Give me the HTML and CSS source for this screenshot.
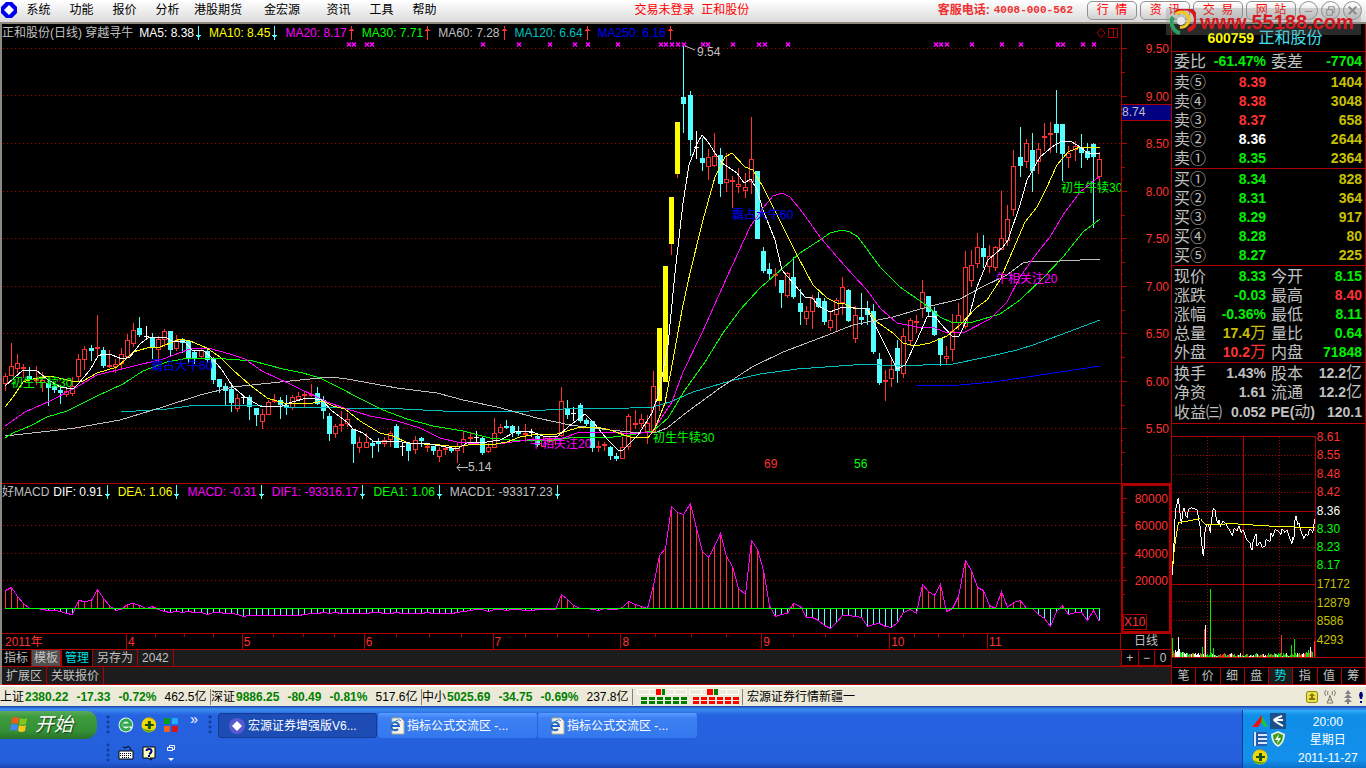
FILE: index.html
```html
<!DOCTYPE html>
<html lang="zh-CN">
<head>
  <meta charset="UTF-8">
  <meta name="viewport" content="width=device-width, initial-scale=1.0">
  <title>宏源证券增强版</title>
  <link rel="stylesheet" href="styles.css">
</head>
<body>
  <svg class="defs" aria-hidden="true">
    <symbol id="down" viewBox="0 0 5 14"><path d="M2 0h1v9h2v1H4v1H3v3H2v-3H1v-1H0V9h2z" fill="#54ffff"/></symbol>
    <symbol id="up" viewBox="0 0 5 14"><path d="M2 14h1V5h2V4H4V3H3V0H2v3H1v1H0v1h2z" fill="#ff3232"/></symbol>
    <symbol id="plus-ball" viewBox="0 0 16 16">
      <circle cx="8" cy="8" r="7.5" fill="#f3d808"/><path d="M1 11a8 8 0 0 0 13 1q-5 3-13-1z" fill="#48a010"/>
      <path d="M14 3a8 8 0 0 0-9-2q5 0 9 2z" fill="#b8860b"/><path d="M7 4h3v3h3v2h-3v3H7V9H4V7h3z" fill="#145214"/>
    </symbol>
    <symbol id="ie" viewBox="0 0 18 18">
      <path d="M5 1h9l3 3v13H5z" fill="#f6f4e6" stroke="#a8a898"/>
      <path d="M11 12a4 4 0 1 1 1-3H4" fill="none" stroke="#1b62c4" stroke-width="2"/>
      <path d="M1 14Q0 11 6 6t8-2" fill="none" stroke="#3c8ce0"/>
    </symbol>
  </svg>

  <header class="menubar">
    <svg class="logo" viewBox="0 0 16 16"><path d="M5 0h6l5 5v6l-5 5H5l-5-5V5z" fill="#0000f0"/><path d="M8 3l5 5-5 5-5-5z" fill="#fff"/></svg>
    <nav class="menu">
      <button>系统</button><button>功能</button><button>报价</button><button>分析</button>
      <button class="w4">港股期货</button><button class="w3">金宏源</button>
      <button>资讯</button><button>工具</button><button>帮助</button>
    </nav>
    <div class="login-state">交易未登录&nbsp; 正和股份</div>
    <div class="phone">客服电话:<span>4008-000-562</span></div>
    <div class="top-buttons">
      <button>行&nbsp; 情</button><button>资&nbsp; 讯</button><button>交&nbsp; 易</button><button>网&nbsp; 站</button>
      <button class="round" aria-label="最小化"><svg viewBox="0 0 18 18"><path d="M5 10h8"/></svg></button>
      <button class="round" aria-label="还原"><svg viewBox="0 0 18 18"><path d="M7 8V5h6v6h-2M5 8h6v6H5z"/></svg></button>
      <button class="round" aria-label="关闭"><svg viewBox="0 0 18 18"><path d="M5 5l8 8M13 5l-8 8" stroke-width="2"/></svg></button>
    </div>
    <div class="watermark">
      <svg viewBox="0 0 26 26"><path d="M6 4a11 11 0 1 1 12 17" fill="none" stroke="#d81820" stroke-width="4"/><path d="M3 8a11 11 0 0 0 7 16" fill="none" stroke="#2aa060" stroke-width="4"/><path d="M6 5q5-4 10 0t2 9-8 4" fill="none" stroke="#f5c820" stroke-width="3"/><circle cx="11" cy="12" r="4" fill="#e8e8e8"/></svg>
      <span>www.55188.com</span>
    </div>
  </header>

  <main class="main">
    <section class="charts">
      <div class="pane price-pane">
        <div class="legend">
          <span class="grey">正和股份(日线) 穿越寻牛</span>
          <span class="white">MA5: 8.38<svg><use href="#down"/></svg></span>
          <span class="yellow">MA10: 8.45<svg><use href="#down"/></svg></span>
          <span class="magenta">MA20: 8.17<svg><use href="#up"/></svg></span>
          <span class="green">MA30: 7.71<svg><use href="#up"/></svg></span>
          <span class="grey">MA60: 7.28<svg><use href="#up"/></svg></span>
          <span class="teal">MA120: 6.64<svg><use href="#up"/></svg></span>
          <span class="blue">MA250: 6.16<svg><use href="#up"/></svg></span>
          <svg class="pane-tools" viewBox="0 0 24 12"><path d="M6 1.5l4 4.5-4 4.500-4-4.500zM13.500 1.500h9v9h-9zM18.500 1.500v9" fill="none" stroke="#b00000"/></svg>
        </div>
        <svg class="plot" id="price" viewBox="2 42 1119 441"></svg>
      </div>
      <div class="axis"><svg class="plot" id="priceAxis" viewBox="1121 24 50 459"></svg></div>

      <div class="pane macd-pane">
        <div class="legend macd-legend">
          <span class="grey">好MACD</span>
          <span class="white">DIF: 0.91<svg><use href="#down"/></svg></span>
          <span class="yellow">DEA: 1.06<svg><use href="#down"/></svg></span>
          <span class="magenta">MACD: -0.31<svg><use href="#down"/></svg></span>
          <span class="magenta">DIF1: -93316.17<svg><use href="#down"/></svg></span>
          <span class="green">DEA1: 1.06<svg><use href="#down"/></svg></span>
          <span class="grey">MACD1: -93317.23<svg><use href="#down"/></svg></span>
        </div>
        <svg class="plot" id="macd" viewBox="2 500 1119 133"></svg>
      </div>
      <div class="axis macd-axis"><svg class="plot" id="macdAxis" viewBox="1123 486 46 145"></svg></div>

      <div class="dates"><svg class="plot" id="dates" viewBox="2 634 1119 15"></svg></div>
      <div class="period">日线</div>

      <div class="tools">
        <button class="black">指标</button><button class="on">模板</button><button class="black manage">管理</button><button>另存为</button><button>2042</button>
      </div>
      <div class="zoomers"><button>+</button><button>−</button><button>0</button></div>
      <div class="tools ext">
        <button>扩展区</button><button>关联报价</button>
      </div>
    </section>

    <aside class="quote">
      <h1><b>600759</b> 正和股份</h1>
      <table>
        <tr class="g"><th>委比</th><td>-61.47%</td><th>委差</th><td>-7704</td></tr>
      </table>
      <table class="book">
        <tr><th>卖⑤</th><td class="r">8.39</td><td>1404</td></tr>
        <tr><th>卖④</th><td class="r">8.38</td><td>3048</td></tr>
        <tr><th>卖③</th><td class="r">8.37</td><td>658</td></tr>
        <tr><th>卖②</th><td class="w">8.36</td><td>2644</td></tr>
        <tr><th>卖①</th><td class="g">8.35</td><td>2364</td></tr>
      </table>
      <table class="book">
        <tr><th>买①</th><td class="g">8.34</td><td>828</td></tr>
        <tr><th>买②</th><td class="g">8.31</td><td>364</td></tr>
        <tr><th>买③</th><td class="g">8.29</td><td>917</td></tr>
        <tr><th>买④</th><td class="g">8.28</td><td>80</td></tr>
        <tr><th>买⑤</th><td class="g">8.27</td><td>225</td></tr>
      </table>
      <table class="stats">
        <tr class="g"><th>现价</th><td>8.33</td><th>今开</th><td>8.15</td></tr>
        <tr class="g"><th>涨跌</th><td>-0.03</td><th>最高</th><td class="r">8.40</td></tr>
        <tr class="g"><th>涨幅</th><td>-0.36%</td><th>最低</th><td>8.11</td></tr>
        <tr class="g"><th>总量</th><td class="y">17.4<i>万</i></td><th>量比</th><td>0.64</td></tr>
        <tr class="g"><th>外盘</th><td class="r">10.2<i>万</i></td><th>内盘</th><td>71848</td></tr>
      </table>
      <table class="stats">
        <tr><th>换手</th><td>1.43%</td><th>股本</th><td>12.2<i>亿</i></td></tr>
        <tr><th>净资</th><td>1.61</td><th>流通</th><td>12.2<i>亿</i></td></tr>
        <tr><th>收益㈢</th><td>0.052</td><th><b>PE(</b>动<b>)</b></th><td>120.1</td></tr>
      </table>
      <svg class="plot mini" id="mini" viewBox="1172 423 193 244"></svg>
      <div class="tabs">
        <button>笔</button><button>价</button><button>细</button><button>盘</button><button class="on">势</button><button>指</button><button>值</button><button>筹</button>
      </div>
    </aside>
  </main>

  <footer class="status">
    <div class="index">上证<b>2380.22</b><b>-17.33</b><b>-0.72%</b><span>462.5亿</span></div>
    <div class="index">深证<b>9886.25</b><b>-80.49</b><b>-0.81%</b><span>517.6亿</span></div>
    <div class="index">中小<b>5025.69</b><b>-34.75</b><b>-0.69%</b><span>237.8亿</span></div>
    <svg class="lights" viewBox="0 0 104 16">
      <path d="M.5.500h49v5H.500zM12.500.500v5M37.500.500v5M52.500.500h49v5h-49zM64.500.500v5M89.500.500v5" fill="none" stroke="#fff"/>
      <path d="M19 0h5v6h-5zM70 0h6v6h-6z" fill="#f00"/><path d="M25 0h3v6h-3zM77 0h4v6h-4z" fill="#008000"/>
      <path d="M4 9.500h47M4 13.500h47" stroke="#008000" stroke-width="3" stroke-dasharray="6 2"/>
      <path d="M56 9.500h47M56 13.500h47" stroke="#f00" stroke-width="3" stroke-dasharray="6 2"/>
    </svg>
    <div class="news">宏源证券行情新疆一</div>
    <svg class="status-icons" viewBox="0 0 60 16">
      <rect x="0.500" y="2.500" width="11" height="11" rx="2" fill="#e8e050" stroke="#908800"/><path d="M6 4l3 3H7v2h2v2H3V9h2V7H3z" fill="#807800"/>
      <path d="M24 6v3M21 14l3-7 3 7zM22 11h4M20 1q-3 3 0 6M28 1q3 3 0 6M22 2q-1 2 0 4M26 2q1 2 0 4" fill="none" stroke="#807c70"/>
      <path d="M42 1l3 4h-6zM42 5l4 4h-8zM42 9l4 4h-8zM41 12h2v3h-2z" fill="#808080"/>
      <path d="M54 3h2l1 3-1 4h-2l-1-4zM54 12h2v2h-2z" fill="#000080"/>
    </svg>
  </footer>

  <footer class="taskbar">
    <button class="start">
      <svg viewBox="0 0 20 18"><path d="M3 2q4-2 7 0L9 8Q6 6 2 8z" fill="#f05a20"/><path d="M11 2q4 2 7 0l-1 6q-4 2-7 0z" fill="#80c820"/><path d="M2 9q4-2 7 0l-1 6q-4-2-7 0z" fill="#4088f8"/><path d="M10 9q4 2 7 0l-1 6q-4 2-7 0z" fill="#f8c820"/></svg>
      开始
    </button>
    <div class="launch">
      <div class="row">
        <i class="grip"></i>
        <svg viewBox="0 0 16 16"><circle cx="8" cy="8" r="7.500" fill="#e8f4e8"/><path d="M12 11a5 5 0 1 1 1-3H5" fill="none" stroke="#30a850" stroke-width="3"/></svg>
        <svg><use href="#plus-ball"/></svg>
        <svg viewBox="0 0 16 16"><path d="M1 1h6v6H1z" fill="#00a010"/><path d="M9 1h6v6H9z" fill="#20b0ff"/><path d="M1 9h6v6H1z" fill="#f06020"/><path d="M9 9h6v6H9z" fill="#e01010"/></svg>
        <span class="more">»</span>
      </div>
      <div class="row">
        <i class="grip"></i>
        <svg viewBox="0 0 16 16"><path d="M1 6h14v8H1z" fill="#fff" stroke="#000"/><path d="M2 8.500h12M2 10.500h12M4 12.500h8" stroke="#000" stroke-dasharray="1 1"/><path d="M5 2q2 2 4 0t4 3" fill="none" stroke="#000"/></svg>
        <svg viewBox="0 0 16 16"><path d="M2 2h12v11H9l2 2-4-2H2z" fill="#ffffc0" stroke="#000"/><path d="M5.500 6q0-2 2.500-2t2.500 2T8 9M8 10v2" fill="none" stroke="#000080" stroke-width="2"/></svg>
        <svg class="restore" viewBox="0 0 10 16"><path d="M3.500 2V.500h5v4H7M1.500 2.500h5v3h-5z" fill="none" stroke="#fff"/><path d="M2 13h6l-3 3z" fill="#fff"/></svg>
      </div>
    </div>
    <i class="grip tall"></i>
    <div class="tasks">
      <button class="active"><svg viewBox="0 0 18 18"><circle cx="9" cy="9" r="8" fill="#5a5ad0"/><path d="M9 4l5 5-5 5-5-5z" fill="#fff"/></svg>宏源证券增强版V6...</button>
      <button><svg><use href="#ie"/></svg>指标公式交流区 -...</button>
      <button><svg><use href="#ie"/></svg>指标公式交流区 -...</button>
    </div>
    <div class="tray">
      <div class="tray-icons">
        <svg viewBox="0 0 16 16"><path d="M0 14L10 2v6l-4 6z" fill="#f01010"/><path d="M10 3l6 11h-3l-4-4z" fill="#20c040"/></svg>
        <svg viewBox="0 0 16 16"><path d="M0 0h16v16H0z" fill="#1c5088"/><path d="M12 3Q4 6 4 7t9 6M4 7h9" fill="none" stroke="#fff" stroke-width="2"/></svg>
        <svg viewBox="0 0 16 16"><path d="M1 1h14v14H1z" fill="#2858a8"/><path d="M3 1v14M6 4h9M6 8h9M6 12h9" stroke="#d8e8ff" stroke-width="2"/></svg>
        <svg viewBox="0 0 16 16"><path d="M8 0l7 3q0 9-7 13Q1 12 1 3z" fill="#e8f0d8"/><path d="M8 2l5 2q0 7-5 10Q3 11 3 4z" fill="#3c9c20"/><path d="M9 3L5 9h3l-1 4 4-6H8z" fill="#fff"/></svg>
        <svg><use href="#plus-ball"/></svg>
      </div>
      <div class="clock"><span>20:00</span><span>星期日</span><span>2011-11-27</span></div>
    </div>
  </footer>

  <script src="script.js"></script>
</body>
</html>
```
FILE: styles.css
```css
* {
  box-sizing: border-box;
}
body {
  margin: 0;
  height: 100vh;
  min-height: 600px;
  display: flex;
  flex-direction: column;
  background-color: #000;
  font-family: "Liberation Sans", "Noto Sans CJK SC", sans-serif;
  font-size: 12px;
  line-height: 16px;
  color: #c0c0c0;
  overflow: hidden;
}
button {
  font: inherit;
  color: inherit;
  margin: 0;
  padding: 0;
  border: none;
  background: none;
  white-space: nowrap;
}
.defs {
  display: none;
}
.plot {
  display: block;
  width: 100%;
  height: 100%;
  min-height: 0;
  flex: 1;
  font-size: 12px;
}

/* menu bar */
.menubar {
  position: relative;
  flex: none;
  height: 24px;
  display: flex;
  align-items: center;
  padding: 0 4px 2px 1px;
  background: linear-gradient(#fff, #ddd 21px);
  border-bottom: 2px solid #8c8880;
  color: #000;
}
.logo {
  width: 16px;
  height: 16px;
}
.menu {
  display: flex;
}
.menu button {
  width: 43px;
}
.menu .w4 {
  width: 58px;
}
.menu .w3 {
  width: 70px;
}
.login-state {
  margin: 0 auto;
  color: #f00;
}
.phone {
  display: flex;
  gap: 4px;
  margin-right: 14px;
  font-weight: bold;
  color: #f03030;
}
.phone span {
  font-family: "Liberation Mono", monospace;
  font-size: 11px;
}
.top-buttons {
  display: flex;
  gap: 3px;
}
.top-buttons button {
  width: 50px;
  height: 19px;
  border: 1px solid #909090;
  border-radius: 5px;
  background: linear-gradient(#fff, #d0d0d0);
  color: #f00;
}
.top-buttons .round {
  width: 19px;
  border-radius: 50%;
}
.round svg {
  display: block;
  width: 17px;
  height: 17px;
  fill: none;
  stroke: #888;
}
.watermark {
  position: absolute;
  z-index: 2;
  top: 8px;
  right: 5px;
  width: 195px;
  height: 27px;
  display: flex;
  align-items: center;
  gap: 4px;
  padding-left: 4px;
  background-color: rgba(140, 140, 140, 0.3);
  color: #d81820;
  font-size: 20px;
  line-height: 24px;
  font-weight: bold;
}
.watermark svg {
  width: 26px;
  height: 26px;
}

/* chart area */
.main {
  flex: 1;
  min-height: 0;
  display: flex;
}
.charts {
  flex: 1;
  min-width: 0;
  display: grid;
  grid-template-columns: minmax(0, 1fr) 50px;
  grid-template-rows: minmax(0, 1fr) 149px 16px 17px 19px;
  border-left: 2px solid #8c8880;
}
.pane {
  display: flex;
  flex-direction: column;
  min-height: 0;
}
.price-pane {
  border-bottom: 1px solid #b00000;
}
.axis {
  min-height: 0;
  border-bottom: 1px solid #b00000;
}
.macd-axis {
  border: 2px solid #b00000;
}
.legend {
  flex: none;
  height: 18px;
  display: flex;
  align-items: center;
  gap: 8px;
  white-space: nowrap;
}
.macd-legend {
  height: 16px;
}
.legend span {
  display: flex;
  align-items: center;
  gap: 2px;
}
.legend span:first-child {
  margin-right: -2px;
}
.macd-legend span:first-child {
  margin-right: -4px;
}
.legend span svg {
  width: 5px;
  height: 14px;
}
.legend .pane-tools {
  width: 24px;
  height: 12px;
  margin-left: auto;
  margin-right: 2px;
}
.grey { color: #c0c0c0; fill: #c0c0c0; }
.white { color: #fff; fill: #fff; }
.yellow { color: #ff0; fill: #ff0; }
.magenta { color: #f0f; fill: #f0f; }
.green { color: #0f0; fill: #0f0; }
.teal { color: #00c0c0; fill: #00c0c0; }
.blue { color: #00f; fill: #00f; }
.red { color: #ff3232; fill: #ff3232; }
.olive { color: #c8c000; fill: #c8c000; }

.shape {
  shape-rendering: crispEdges;
}
.dates {
  border: 1px solid #b00000;
  border-width: 1px 1px 0 0;
}
.period {
  border-top: 1px solid #b00000;
  text-align: center;
  line-height: 15px;
}
.tools {
  display: flex;
  background-color: #1c1c1c;
  border-top: 1px solid #b00000;
}
.tools button {
  padding: 0 4px;
  border-right: 1px solid #b00000;
  line-height: 16px;
}
.tools .black {
  background-color: #000;
  padding: 0 3px 0 2px;
}
.tools .on {
  background-color: #505050;
  border-right-width: 2px;
  padding: 0 2px;
}
.tools .manage {
  color: #00e0e0;
  padding: 0 3px;
}
.zoomers {
  display: flex;
  border: 1px solid #b00000;
  border-right: 0;
}
.zoomers button {
  flex: 1;
  line-height: 14px;
}
.zoomers button + button {
  border-left: 1px solid #b00000;
}
.ext {
  grid-column: 1 / 3;
  border-bottom: 1px solid #b00000;
}

/* quote panel */
.quote {
  flex: none;
  width: 195px;
  display: flex;
  flex-direction: column;
  border: 1px solid #b00000;
  border-width: 0 1px;
}
.quote h1 {
  height: 28px;
  margin: 0;
  padding: 4px 7px 0 0;
  border-bottom: 1px solid #b00000;
  font-size: 16px;
  line-height: 20px;
  font-weight: normal;
  text-align: center;
  color: #40e0f0;
}
.quote h1 b {
  font-size: 14px;
  color: #ff0;
}
.quote table {
  width: 100%;
  table-layout: fixed;
  border-collapse: separate;
  border-spacing: 0;
  border-bottom: 1px solid #b00000;
}
.quote .book,
.quote .stats {
  padding-top: 1px;
}
.quote .stats + .stats {
  padding-bottom: 1px;
}
.quote tr {
  height: 19px;
  line-height: 19px;
}
.quote th {
  width: 36px;
  height: 19px;
  padding: 0 0 0 2px;
  font-size: 16px;
  font-weight: normal;
  text-align: left;
  white-space: nowrap;
}
.quote th b {
  font-size: 14px;
}
.quote td + th {
  width: 41px;
  padding-left: 5px;
}
.quote td {
  width: 58px;
  height: 19px;
  padding: 0;
  font-size: 14px;
  font-weight: bold;
  text-align: right;
  white-space: nowrap;
}
.quote td:last-child {
  padding-right: 3px;
}
.quote .book td:last-child {
  width: 99px;
  color: #c8c000;
}
.quote i {
  font-size: 16px;
  font-style: normal;
  font-weight: normal;
  line-height: 16px;
}
.quote .r { color: #ff3232; }
.quote .g td, .quote td.g { color: #00f000; }
.quote .g td.r { color: #ff3232; }
.quote .y, .quote .g td.y { color: #c8c000; }
.quote .w { color: #fff; }
.tabs {
  flex: none;
  height: 18px;
  display: flex;
  border: 1px solid #b00000;
  border-width: 1px 0;
}
.tabs button {
  flex: 1;
}
.tabs button + button {
  border-left: 1px solid #b00000;
}
.tabs .on {
  background-color: #1c1c1c;
  color: #00e0e0;
}

/* index line */
.status {
  flex: none;
  height: 21px;
  display: flex;
  align-items: center;
  background-color: #ece9d8;
  border-top: 2px solid #fff;
  color: #000;
  white-space: nowrap;
}
.index {
  flex: none;
  width: 211px;
  display: flex;
  gap: 8px;
  border-right: 1px solid #808080;
}
.index b {
  color: #008000;
}
.index b:first-child {
  margin-left: -7px;
}
.lights {
  width: 104px;
  height: 16px;
  margin-left: 4px;
}
.news {
  margin-left: 1px;
  padding-left: 4px;
  border-left: 1px solid #808080;
}
.status-icons {
  width: 60px;
  height: 16px;
  margin-left: auto;
}

/* task bar */
.taskbar {
  flex: none;
  height: 62px;
  display: flex;
  align-items: flex-start;
  background: linear-gradient(#1941a5, #3c8cf0 3px, #2663e0 9px, #245edb 56px, #1a48b0);
  color: #fff;
}
.start {
  width: 97px;
  height: 28px;
  margin-top: 5px;
  display: flex;
  align-items: center;
  gap: 6px;
  padding-left: 9px;
  border-radius: 0 10px 12px 0;
  background: linear-gradient(#5cab5c, #3c9a3c 6px, #359035 20px, #27702a);
  font-size: 19px;
  line-height: 26px;
  font-style: italic;
  text-shadow: 1px 1px 1px #144014;
}
.start svg {
  width: 20px;
  height: 18px;
}
.launch {
  width: 101px;
  margin-top: 5px;
  padding-left: 9px;
}
.row {
  height: 28px;
  display: flex;
  align-items: center;
  gap: 7px;
}
.row svg {
  width: 16px;
  height: 16px;
}
.row .restore {
  width: 10px;
  margin-left: 2px;
}
.more {
  margin: -12px 0 0 4px;
  font-size: 14px;
}
.grip {
  width: 5px;
  height: 20px;
  background: radial-gradient(circle at 2px 2px, #123f9c 1px, transparent 2px) 0 0 / 5px 5px;
}
.tall {
  margin: 9px 0 0 10px;
}
.tasks {
  display: flex;
  gap: 1px;
  margin: 7px 0 0 5px;
}
.tasks button {
  width: 159px;
  height: 25px;
  display: flex;
  align-items: center;
  gap: 2px;
  padding-left: 9px;
  border-radius: 3px;
  background: linear-gradient(#5c9cff, #3c80f4 5px, #3478ee);
}
.tasks .active {
  background-color: #1c4cb4;
  background-image: none;
  border: 1px solid #123c94;
}
.tasks svg {
  width: 18px;
  height: 18px;
}
.tray {
  align-self: stretch;
  width: 124px;
  margin: 4px 0 0 auto;
  display: flex;
  gap: 12px;
  padding: 3px 0 0 9px;
  border-left: 1px solid #0a3c9c;
  background: linear-gradient(#30b0f8, #0f8ee8 5px, #1290ec 50px, #0c70c8);
}
.tray-icons {
  display: grid;
  grid-template-columns: 16px 16px;
  grid-auto-rows: 16px;
  gap: 2px;
}
.tray-icons svg {
  width: 16px;
  height: 16px;
}
.clock {
  display: flex;
  flex-direction: column;
  align-items: center;
  line-height: 18px;
}
```
FILE: script.js
```javascript
const NS = 'http://www.w3.org/2000/svg';
const RED = '#b00000';
const STEP = 6.112;

function el(parent, tag, attrs, text) {
  const node = document.createElementNS(NS, tag);
  for (const key in attrs) node.setAttribute(key, attrs[key]);
  if (text) node.textContent = text;
  parent.appendChild(node);
  return node;
}

function line(svg, x1, y1, x2, y2, color, dash) {
  el(svg, 'path', { d: `M${x1} ${y1}L${x2} ${y2}`, stroke: color || RED, fill: 'none', class: 'shape', 'stroke-dasharray': dash || 'none' });
}

function rect(svg, x, y, width, height, fill) {
  el(svg, 'rect', { x, y, width, height, fill, class: 'shape' });
}

function label(svg, x, y, cls, text, anchor) {
  el(svg, 'text', { x, y, class: cls, 'text-anchor': anchor || 'start' }, text);
}

function curve(svg, color, points) {
  el(svg, 'polyline', { points, stroke: color, fill: 'none', class: 'shape' });
}

function xOf(i) {
  return Math.round(5 + i * STEP);
}

// high, body top, body bottom, low, kind (r up, c down, w flat, y limit up)
const candles = `373 376 384 391 r,343 366 376 376 r,354 363 369 373 r,364 367 369 378 r,367 376 380 380 c,366 379 381 385 r,372 380 383 392 r,380 383 388 406 c,385 386 390 393 c,385 390 393 404 c,
387 391 395 397 r,377 386 394 396 r,354 359 377 381 r,346 349 360 370 r,345 348 351 361 c,315 347 349 357 r,347 350 366 368 c,350 365 367 368 r,359 364 367 373 r,348 354 364 370 r,
334 340 357 358 r,323 330 344 347 r,317 328 335 337 c,326 336 337 340 w,333 337 347 359 c,336 339 350 362 r,329 331 340 347 r,331 331 350 357 c,335 340 349 351 r,338 340 343 353 c,
341 341 358 363 c,350 352 359 364 c,347 350 357 359 r,348 351 360 363 c,357 358 380 384 c,379 379 387 393 c,383 386 391 405 c,383 389 403 412 c,394 398 409 412 r,395 397 398 404 w,
395 397 407 420 c,408 408 415 426 c,409 414 422 429 r,400 402 415 415 r,394 400 402 403 r,397 400 405 419 c,395 405 407 415 c,395 397 408 410 r,392 396 400 401 r,392 394 396 407 r,
384 394 396 397 r,387 393 404 405 c,396 400 411 419 c,413 416 434 441 c,424 426 434 438 r,411 424 426 432 r,413 419 424 427 r,429 429 444 463 c,437 442 448 453 r,433 442 448 448 r,
441 443 446 458 c,438 442 444 452 c,437 440 444 447 r,431 433 440 447 r,424 426 448 448 c,442 446 447 456 w,442 443 451 461 c,436 440 450 454 r,437 438 441 447 c,443 446 447 452 r,
446 446 451 455 c,447 450 457 462 r,446 448 450 455 r,447 448 451 453 c,443 446 451 463 r,431 439 446 453 r,433 437 439 442 r,431 437 438 442 w,436 438 453 455 c,443 447 452 453 r,
418 433 448 448 r,424 427 433 434 r,420 426 427 429 c,425 426 433 437 c,426 431 434 436 c,424 433 434 442 r,429 432 433 437 w,435 436 445 447 c,437 440 447 447 r,437 439 442 443 r,
437 438 441 445 r,387 401 436 437 r,400 409 415 419 c,407 413 414 421 w,403 405 421 423 c,418 420 424 426 c,421 421 448 452 c,441 446 448 452 r,442 444 445 451 r,446 447 456 460 c,
453 456 459 461 c,437 447 459 459 r,414 416 447 450 r,410 423 424 429 r,414 419 424 428 r,415 423 432 444 r,371 386 432 432 r,328 328 401 411 y,266 266 382 382 y,197 197 244 255 y,
122 122 174 178 y,46 97 104 133 c,91 95 140 156 c,131 147 148 159 w,138 158 163 171 c,149 157 167 180 r,133 156 166 167 r,148 155 184 197 c,153 179 183 192 r,176 180 182 208 r,
168 184 187 193 r,173 187 191 198 r,117 159 182 194 r,171 171 239 239 c,247 251 271 273 c,263 269 274 279 c,268 274 276 286 r,280 280 293 308 c,272 273 296 298 r,257 277 297 299 c,
289 303 312 325 c,306 311 319 325 r,295 298 312 329 r,292 298 307 308 c,298 301 322 325 c,312 320 328 331 r,298 300 315 331 r,277 287 303 315 r,289 290 321 322 c,306 315 339 343 r,
293 317 320 325 c,301 308 315 325 c,304 311 352 354 c,353 359 383 385 c,370 380 382 401 r,358 369 379 387 r,340 348 371 383 c,328 336 374 378 r,318 320 341 346 r,315 321 323 333 r,
280 292 309 318 r,296 296 312 317 c,307 311 335 336 c,338 338 355 366 c,346 356 359 364 r,314 331 350 361 r,303 315 323 330 r,251 267 327 329 r,250 265 281 287 r,233 247 264 268 r,
235 248 257 268 c,245 256 267 273 r,246 247 268 271 r,191 238 250 250 r,205 219 241 246 r,150 166 210 216 r,127 157 166 177 c,139 143 162 168 r,133 150 171 192 c,143 149 162 174 r,
123 136 138 151 r,122 133 135 153 r,90 124 133 153 c,124 124 154 181 c,146 153 158 168 r,141 146 150 161 r,134 147 153 168 c,143 151 158 160 c,143 144 157 228 c,152 159 177 181 r`.split(',');

const averages = {
  '#0000ff': '916,386 960,385 993,382 1027,377 1060,372 1100,366',
  '#00c0c0': '121,412 167,409 197,405 240,405 283,407 340,408 403,409 463,412 530,411 563,409 630,408 653,407 670,402 693,392 730,381 760,374 797,369 867,364 893,366 953,364 987,357 1017,350 1033,345 1060,335 1100,320',
  '#c0c0c0': '5,436 50,431 75,428 120,420 163,407 200,395 233,387 290,381 330,377 347,379 397,388 437,393 463,400 497,407 537,418 570,425 610,430 630,432 657,432 667,428 687,412 720,388 752,367 783,352 820,338 853,325 893,317 927,307 960,299 980,288 1007,275 1023,263 1033,261 1060,261 1100,259',
  '#00ff00': '5,438 13,433 30,426 47,417 67,411 97,396 123,384 143,371 167,362 183,359 213,358 253,361 283,369 303,373 320,378 340,388 357,397 383,410 407,419 433,426 463,431 490,438 510,440 547,441 577,437 613,437 630,435 653,431 668,418 685,390 705,362 723,333 740,310 760,288 783,268 800,253 820,240 830,233 842,230 850,232 858,237 880,267 900,287 923,303 940,317 953,323 973,322 1000,314 1020,300 1043,278 1063,257 1083,232 1100,219',
  '#ff00ff': '5,426 25,412 50,401 75,388 97,375 130,367 163,359 190,349 208,348 230,354 245,359 262,371 292,385 327,402 347,409 370,416 397,421 420,428 440,438 457,442 490,445 527,440 563,438 580,432 613,432 630,434 652,432 660,420 672,402 683,372 702,333 727,277 750,227 763,208 773,196 782,193 790,197 803,213 820,237 837,257 853,275 867,290 880,308 897,323 917,327 932,327 945,332 963,333 990,319 1007,302 1020,277 1037,253 1050,237 1063,215 1080,192 1100,176',
  '#ffff00': '5,407 13,397 23,382 33,379 50,376 63,379 75,382 83,381 97,373 117,367 125,360 133,352 147,348 160,347 180,339 190,341 207,348 220,357 233,370 250,385 267,398 287,404 313,403 323,401 333,406 345,409 360,421 380,433 393,436 408,443 440,445 457,447 473,444 490,445 507,442 520,437 537,434 557,434 577,428 597,427 610,430 630,437 648,438 655,428 665,403 673,360 682,310 690,273 703,220 715,177 725,157 732,153 745,167 753,170 763,187 783,227 798,257 813,285 827,298 837,303 843,303 853,308 867,309 877,322 893,333 903,343 915,346 930,343 947,336 960,325 977,307 987,300 1000,280 1013,250 1025,222 1037,207 1047,187 1057,165 1068,152 1080,147 1100,148',
  '#ffffff': '5,386 23,370 36,370 47,379 60,387 73,389 78,384 90,370 98,356 103,354 112,355 122,359 130,357 140,344 148,338 165,337 172,341 184,341 192,350 203,350 212,358 222,370 233,387 245,397 260,406 280,407 292,402 307,398 322,400 332,411 347,422 353,429 363,433 373,441 378,442 392,441 402,442 410,443 430,444 457,449 467,443 487,442 500,440 517,431 530,431 543,436 557,437 568,427 585,414 593,422 607,439 618,450 623,450 638,435 652,413 659,393 668,345 675,273 683,203 689,165 697,144 702,135 708,142 715,153 722,163 737,173 744,183 751,179 757,190 763,210 775,240 782,270 805,297 812,298 820,307 830,312 843,307 867,309 875,325 887,349 897,369 905,365 917,340 927,317 935,316 940,323 952,336 959,336 970,313 977,287 988,260 1003,247 1008,240 1020,205 1027,180 1040,157 1052,147 1062,141 1072,142 1080,147 1088,153 1100,154'
};

function drawPrice() {
  const svg = document.getElementById('price');
  [48, 95, 143, 191, 238, 286, 333, 381, 428].forEach(y => line(svg, 3, y + 0.5, 1121, y + 0.5, RED, '1 3'));

  candles.forEach((row, i) => {
    const [high, top, bottom, low, kind] = row.trim().split(' ');
    const x = xOf(i);
    const color = { r: '#ff3232', c: '#54ffff', w: '#fff', y: '#ff0' }[kind];
    rect(svg, x, +high, 1, low - high, kind === 'y' ? '#ff3232' : color);
    if (kind === 'w') {
      rect(svg, x - 2, +top, 5, 1, color);
    } else if (kind === 'r' && bottom - top > 2) {
      el(svg, 'rect', { x: x - 1.5, y: +top + 0.5, width: 4, height: bottom - top - 1, fill: '#000', stroke: color, class: 'shape' });
    } else {
      rect(svg, x - 2, +top, 5, Math.max(bottom - top, 2), color);
    }
  });

  for (const color in averages) curve(svg, color, averages[color]);

  [349, 354, 367, 372, 483, 519, 550, 575, 588, 618, 661, 666, 672, 678, 684, 703, 708, 733, 759, 765, 788, 936, 941, 947, 972, 1002, 1021, 1058, 1063, 1083, 1094].forEach(x => {
    el(svg, 'path', { d: `M${x - 2} 42.500l4 4m0-4l-4 4`, stroke: '#f0f', 'stroke-width': 1.5 });
  });

  label(svg, 11, 387, 'green', '初生牛犊30');
  label(svg, 151, 370, 'blue', '霸占大牛60');
  label(svg, 530, 448, 'magenta', '牛相关注20');
  label(svg, 653, 442, 'green', '初生牛犊30');
  label(svg, 732, 219, 'blue', '霸占大牛60');
  label(svg, 996, 283, 'magenta', '牛相关注20');
  label(svg, 1061, 192, 'green', '初生牛犊30');
  label(svg, 764, 468, 'red', '69');
  label(svg, 854, 468, 'green', '56');
  label(svg, 697, 56, 'grey', '9.54');
  label(svg, 468, 471, 'grey', '5.14');
  el(svg, 'path', { d: 'M685 46l10 4M457 467.500h11M460 464l-3 3.500l3 3.500', stroke: '#c0c0c0', fill: 'none' });
}

function drawPriceAxis() {
  const svg = document.getElementById('priceAxis');
  rect(svg, 1121, 24, 1, 459, RED);
  ['9.50', '9.00', '8.50', '8.00', '7.50', '7.00', '6.50', '6.00', '5.50'].forEach((text, i) => {
    const y = Math.round(48 + i * 47.5);
    rect(svg, 1122, y, 5, 1, RED);
    rect(svg, 1122, y + 12, 1, 1, RED);
    rect(svg, 1122, y + 24, 3, 1, RED);
    rect(svg, 1122, y + 36, 1, 1, RED);
    label(svg, 1169, y + 5, 'red', text, 'end');
  });
  rect(svg, 1122, 104, 49, 17, RED);
  rect(svg, 1122, 105, 49, 15, '#000080');
  label(svg, 1122, 116, 'grey', '8.74');
}

const macd = [18, 21, 12, 5, 0, 0, -1, -2, -2, -3, -5, -6, 8, 7, 8, 19, 10, 3, -2, -1, 4, 5, 3, 0, 2, -1, -3, -4, -3, -4,
  -3, -4, -4, -6, -4, -4, -5, -5, -6, -8, -7, -7, -7, -7, -7, -7, -7, -7, -7, -6, -5, -5, -4, -5, -4, -5, -5, -5, -5, -5,
  -4, -4, -5, -5, -4, -5, -5, -5, -5, -4, -5, -5, -5, -5, -4, -3, -2, -1, -1, -3, -1, -1, -2, -1, -1, -2, -2, -1, -1, -1,
  -1, 14, 9, 3, 0, 0, -1, -2, 0, -1, -1, 1, 7, 4, 2, 0, 23, 53, 60, 102, 96, 94, 105, 80, 57, 51, 62, 75, 52, 42,
  20, 14, 68, 59, 38, 3, -8, -6, -5, 5, 2, -9, -9, -12, -17, -20, -14, -7, -7, -8, -9, -18, -16, -15, -18, -19, -14, -4, -1, -5,
  24, 17, 13, 24, -3, 0, 12, 48, 38, 21, 18, 3, 0, 17, 1, 6, 8, 0, 0, -6, -10, -18, -3, 3, -6, -4, -4, -12, -2, -13];

function drawMacd() {
  const svg = document.getElementById('macd');
  const zero = 608;
  [525, 553, 580].forEach(y => line(svg, 3, y + 0.5, 1121, y + 0.5, RED, '1 3'));
  macd.forEach((v, i) => {
    if (v > 0) rect(svg, xOf(i), zero - v, 1, v, '#ff3232');
    if (v < 0) rect(svg, xOf(i), zero, 1, -v, '#54ffff');
  });
  curve(svg, '#ff00ff', macd.map((v, i) => `${xOf(i) + 0.5},${zero - v + 0.5}`).join(' '));
  rect(svg, 5, zero, 1095, 1, '#0f0');

  const axis = document.getElementById('macdAxis');
  [[498, '80000'], [525, '60000'], [553, '40000'], [580, '20000']].forEach(([y, text]) => {
    rect(axis, 1123, y, 4, 1, RED);
    rect(axis, 1123, y + 14, 2, 1, RED);
    label(axis, 1168, y + 5, 'red', text, 'end');
  });
  el(axis, 'rect', { x: 1123.5, y: 614.5, width: 23, height: 15, fill: 'none', stroke: RED });
  label(axis, 1124, 626, 'red', 'X10');
}

function drawDates() {
  const svg = document.getElementById('dates');
  label(svg, 5, 646, 'red', '2011年');
  [[126, '4'], [242, '5'], [364, '6'], [493, '7'], [621, '8'], [762, '9'], [890, '10'], [988, '11']].forEach(([x, text]) => {
    rect(svg, x, 634, 1, 15, RED);
    label(svg, x + 2, 646, 'red', text);
  });
  [155, 184, 213, 273, 303, 334, 396, 429, 461, 525, 557, 589, 656, 692, 727, 794, 826, 858, 915, 939, 964].forEach(x => rect(svg, x, 634, 1, 3, RED));
}

function drawMini() {
  const svg = document.getElementById('mini');
  [454, 473, 491, 528, 547, 565, 601, 620, 638].forEach(y => line(svg, 1173, y + 0.5, 1315, y + 0.5, RED, '1 2'));
  [1207, 1279].forEach(x => line(svg, x + 0.5, 436, x + 0.5, 657, RED, '1 2'));
  [435, 510, 584, 657].forEach(y => rect(svg, 1172, y, y === 657 ? 193 : 144, 1, RED));
  rect(svg, 1243, 435, 1, 222, RED);
  rect(svg, 1315, 435, 1, 222, RED);

  // turnover, two minutes to a bar
  const heights = '975867896466534423335434234243331223123435221122312343122334323112224121123311221213432122331212423322433253411423521124323424352334346485576';
  const colors = ['#ff3232', '#fff', '#00f000'];
  [...heights].forEach((h, i) => {
    const v = Math.ceil(h * 0.8);
    rect(svg, 1172 + i, 657 - v, 1, v, colors[(i * 7 + h * 5) % 3]);
  });
  [[1172, 19, 2], [1178, 20, 1], [1202, 10, 2], [1204, 28, 0], [1205, 32, 1], [1210, 68, 2], [1213, 9, 2], [1281, 22, 0], [1291, 12, 2], [1294, 18, 2], [1310, 10, 1], [1314, 16, 0]].forEach(([x, h, c]) => rect(svg, x, 657 - h, 1, h, colors[c]));

  curve(svg, '#ffffff', '1172,575 1173,557 1175,510 1178,497 1179,507 1181,523 1183,508 1184,507 1185,514 1187,517 1188,509 1191,507 1197,509 1198,517 1200,527 1201,540 1203,556 1204,545 1205,527 1208,523 1210,532 1211,521 1213,508 1215,509 1216,518 1218,523 1219,519 1220,526 1223,520 1226,524 1229,529 1232,535 1234,528 1237,530 1239,525 1241,532 1243,529 1247,540 1250,543 1252,550 1253,541 1256,533 1257,546 1260,541 1262,547 1265,546 1266,539 1270,541 1271,532 1273,536 1275,529 1278,530 1281,534 1282,528 1285,532 1287,529 1290,538 1292,543 1293,536 1294,539 1295,520 1296,515 1298,524 1299,522 1301,530 1304,538 1306,533 1308,535 1310,528 1313,532 1315,518');
  curve(svg, '#ffff00', '1172,566 1175,540 1178,522 1190,520 1200,518 1205,524 1215,524 1232,523 1262,525 1279,526 1315,527');

  [[436, 'red', '8.61'], [454, 'red', '8.55'], [473, 'red', '8.48'], [491, 'red', '8.42'], [510, 'white', '8.36'], [528, 'green', '8.30'], [547, 'green', '8.23'], [565, 'green', '8.17'],
    [584, 'olive', '17172'], [603, 'olive', '12879'], [621, 'olive', '8586'], [640, 'olive', '4293']].forEach(([y, cls, text]) => label(svg, 1317, y + 4, cls, text));
}

drawPrice();
drawPriceAxis();
drawMacd();
drawDates();
drawMini();
```
